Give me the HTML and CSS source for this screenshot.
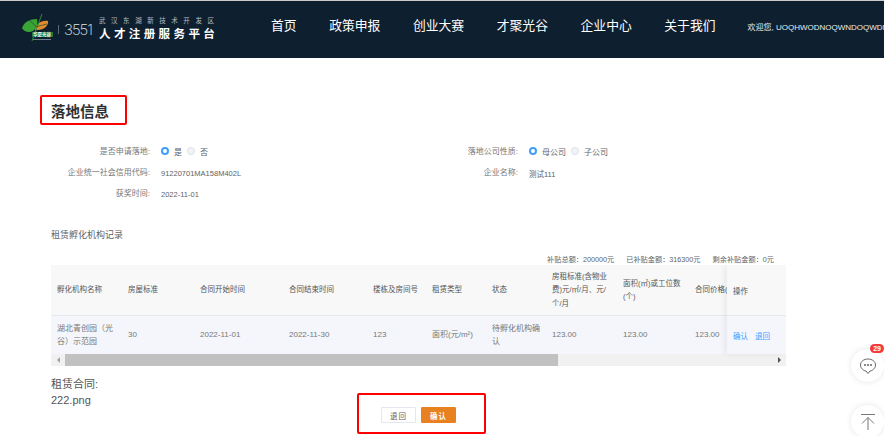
FILE: index.html
```html
<!DOCTYPE html>
<html lang="zh-CN">
<head>
  <meta charset="UTF-8" />
  <title>落地信息</title>
  <link rel="stylesheet" href="styles.css">
</head>
<body>
  <header class="header">
    <div class="brand">
      <svg class="logo" width="34" height="32" viewBox="0 0 34 32">
        <path d="M2 15C4 9 10 6 17 6C18 10 17 15 13 18C9 20 4 19 2 15Z" fill="#3aa535"/>
        <path d="M15 17C16 11 21 7 28 8C29 12 24 18 15 17Z" fill="#e58a2c"/>
        <path d="M22 1L12 28" stroke="#2e8b3a" stroke-width="1" fill="none"/>
        <path d="M9 7L16 13M15 14L27 11" stroke="#14502a" stroke-width=".7" fill="none"/>
        <rect x="12" y="19" width="21" height="5" fill="#1d7a3a"/>
        <text class="logo-text" x="13" y="23">华夏光谷</text>
        <rect x="13" y="26" width="18" height="1" fill="#6f7d86"/>
      </svg>
      <span class="brand-sep"></span>
      <span class="brand-num">3551</span>
      <div class="brand-text">
        <div class="brand-sub">武汉东湖新技术开发区</div>
        <div class="brand-name">人才注册服务平台</div>
      </div>
    </div>
    <nav class="nav">
      <a class="nav-item">首页</a>
      <a class="nav-item">政策申报</a>
      <a class="nav-item">创业大赛</a>
      <a class="nav-item">才聚光谷</a>
      <a class="nav-item">企业中心</a>
      <a class="nav-item">关于我们</a>
    </nav>
    <div class="welcome">欢迎您, UOQHWODNOQWNDOQWDNQOWD</div>
  </header>

  <main class="content">
    <h2 class="title">落地信息</h2>

    <div class="form">
      <div class="form-col">
        <div class="form-row">
          <label class="form-label">是否申请落地:</label>
          <div class="radios">
            <span class="radio on"></span><span class="radio-text">是</span>
            <span class="radio"></span><span class="radio-text">否</span>
          </div>
        </div>
        <div class="form-row">
          <label class="form-label">企业统一社会信用代码:</label>
          <div class="form-value">91220701MA158M402L</div>
        </div>
        <div class="form-row">
          <label class="form-label">获奖时间:</label>
          <div class="form-value">2022-11-01</div>
        </div>
      </div>
      <div class="form-col">
        <div class="form-row">
          <label class="form-label">落地公司性质:</label>
          <div class="radios">
            <span class="radio on"></span><span class="radio-text">母公司</span>
            <span class="radio"></span><span class="radio-text">子公司</span>
          </div>
        </div>
        <div class="form-row">
          <label class="form-label">企业名称:</label>
          <div class="form-value">测试111</div>
        </div>
      </div>
    </div>

    <div class="section-title">租赁孵化机构记录</div>
    <div class="summary">
      <span>补贴总额：200000元</span>
      <span>已补贴金额：316300元</span>
      <span>剩余补贴金额：0元</span>
    </div>

    <div class="table">
      <div class="table-row table-head">
        <div class="cell">孵化机构名称</div>
        <div class="cell">房屋标准</div>
        <div class="cell">合同开始时间</div>
        <div class="cell">合同结束时间</div>
        <div class="cell">楼栋及房间号</div>
        <div class="cell">租赁类型</div>
        <div class="cell">状态</div>
        <div class="cell">房租标准(含物业费)元/㎡/月、元/个/月</div>
        <div class="cell">面积(㎡)或工位数(个)</div>
        <div class="cell clip">合同价格(元)</div>
      </div>
      <div class="table-row table-body">
        <div class="cell">湖北青创园（光谷）示范园</div>
        <div class="cell">30</div>
        <div class="cell">2022-11-01</div>
        <div class="cell">2022-11-30</div>
        <div class="cell">123</div>
        <div class="cell">面积(元/m²)</div>
        <div class="cell">待孵化机构确认</div>
        <div class="cell">123.00</div>
        <div class="cell">123.00</div>
        <div class="cell clip">123.00</div>
      </div>
      <div class="fixed-col">
        <div class="fixed-head">操作</div>
        <div class="fixed-body"><a class="link">确认</a><a class="link">退回</a></div>
      </div>
      <div class="scrollbar">
        <span class="arrow-left"></span>
        <div class="scroll-track"><div class="scroll-thumb"></div></div>
        <span class="arrow-right"></span>
      </div>
    </div>

    <div class="contract">
      <div>租赁合同:</div>
      <div>222.png</div>
    </div>

    <div class="actions">
      <button class="btn">退回</button>
      <button class="btn btn-primary">确认</button>
    </div>
  </main>

  <div class="mark mark-title"></div>
  <div class="mark mark-actions"></div>

  <div class="float-btn float-chat">
    <span class="badge">29</span>
    <svg width="18" height="18" viewBox="0 0 18 18" fill="none" stroke="#666" stroke-width="1">
      <path d="M9 2C4.800 2 1.500 4.600 1.500 8S4.800 14 7 14L9 16.500L11 14C13.200 14 16.500 11.400 16.500 8S13.200 2 9 2Z"/>
      <circle cx="6" cy="8" r=".6" fill="#666"/><circle cx="9" cy="8" r=".6" fill="#666"/><circle cx="12" cy="8" r=".6" fill="#666"/>
    </svg>
  </div>
  <div class="float-btn float-top">
    <svg width="16" height="18" viewBox="0 0 16 18" fill="none" stroke="#777" stroke-width="1">
      <path d="M1 1.500H15M8 17V4.500M2 10.500L8 4.500L14 10.500"/>
    </svg>
  </div>
</body>
</html>
```

FILE: styles.css
```css
* {
  box-sizing: border-box;
}
html, body {
  height: 100%;
}
body {
  margin: 0;
  overflow: hidden;
  background: #fff;
  color: #606266;
  font-family: "Liberation Sans", "Noto Sans CJK SC", sans-serif;
  font-size: 8px;
}

/* header */
.header {
  display: flex;
  align-items: flex-start;
  height: 58px;
  border-top: 1px solid #c9c9c9;
  background: #0e2030;
  color: #fff;
  white-space: nowrap;
  overflow: hidden;
}
.brand {
  display: flex;
  flex: none;
  align-items: center;
  width: 271px;
  height: 46px;
  padding: 9px 0 0 20px;
}
.logo {
  flex: none;
}
.logo-text {
  fill: #fff;
  font-size: 4.500px;
  font-weight: 700;
}
.brand-sep {
  width: 1px;
  height: 9px;
  margin: 2px 5px 0 4px;
  background: #5a6873;
}
.brand-num {
  width: 35px;
  margin-top: 1px;
  font-family: Inter, "Liberation Sans", sans-serif;
  font-size: 15px;
  font-weight: 200;
  letter-spacing: -1px;
  color: #dfe3e6;
}
.brand-sub {
  font-size: 6.500px;
  letter-spacing: 5.550px;
  line-height: 9px;
  color: #b6bdc3;
}
.brand-name {
  margin-top: 2px;
  font-size: 11.500px;
  font-weight: 700;
  letter-spacing: 3.400px;
  line-height: 14px;
}
.nav {
  display: flex;
  flex: none;
  gap: 32.600px;
  padding-top: 16px;
}
.nav-item {
  font-size: 12.800px;
  line-height: 18px;
}
.welcome {
  margin-left: 32px;
  padding-top: 21px;
  font-size: 8px;
  line-height: 11px;
  color: #e8ebed;
}

/* page */
.content {
  padding: 0 98px 0 51px;
}
.title {
  margin: 44px 0 0;
  font-size: 14.500px;
  font-weight: 700;
  line-height: 20px;
  color: #303133;
}
.form {
  display: flex;
  margin-top: 18px;
}
.form-col {
  width: 368px;
}
.form-col + .form-col {
  width: 300px;
}
.form-row {
  display: flex;
  align-items: center;
  height: 21px;
}
.form-label {
  width: 99px;
  text-align: right;
  color: #777;
  font-size: 8px;
}
.form-value {
  margin-left: 11px;
  padding-top: 3px;
  font-size: 7.500px;
  color: #606266;
}
.radios {
  display: flex;
  align-items: center;
  margin-left: 11px;
  padding-top: 1px;
}
.radio {
  width: 8px;
  height: 8px;
  border: 1px solid #dcdfe6;
  border-radius: 50%;
  background: #f3f4f7;
}
.radio.on {
  border: 2.500px solid #409eff;
  background: #fff;
}
.radio-text {
  margin: 0 5px 0 5px;
  font-size: 8px;
}
.section-title {
  margin-top: 25px;
  font-size: 9px;
  line-height: 14px;
  color: #606266;
}
.summary {
  display: flex;
  justify-content: flex-end;
  gap: 12px;
  margin: 13px 0 0;
  padding-right: 12px;
  font-size: 7.200px;
  line-height: 10px;
}

/* table */
.table {
  position: relative;
  width: 735px;
  height: 101px;
  margin-top: 0;
  overflow: hidden;
  font-size: 7.500px;
}
.table-row {
  display: grid;
  grid-template-columns: 71px 72px 89px 84px 59px 60px 60px 71px 72px 38px;
  align-items: center;
}
.table-head {
  height: 51px;
  border-bottom: 1px solid #e6e8ec;
  background: #f8f8f9;
  color: #555;
}
.table-body {
  height: 38px;
  background: #f4f6fb;
  color: #777;
  font-size: 8px;
}
.cell {
  padding: 0 6px;
  line-height: 13.500px;
}
.clip {
  padding-right: 0;
  overflow: hidden;
  white-space: nowrap;
}
.fixed-col {
  position: absolute;
  top: 0;
  right: 0;
  width: 59px;
  height: 89px;
  background: #f8f8f9;
  box-shadow: -3px 0 6px rgba(0, 0, 0, 0.06);
}
.fixed-head {
  display: flex;
  align-items: center;
  height: 51px;
  padding-left: 6px;
  border-bottom: 1px solid #e6e8ec;
  color: #555;
}
.fixed-body {
  display: flex;
  align-items: center;
  gap: 7px;
  height: 38px;
  padding-left: 6px;
  background: #f4f6fb;
}
.link {
  color: #409eff;
  font-size: 7.500px;
}
.scrollbar {
  display: flex;
  align-items: center;
  height: 12px;
  background: #f1f1f1;
}
.scroll-track {
  flex: 1;
  height: 12px;
}
.scroll-thumb {
  width: 493px;
  height: 100%;
  background: #c1c1c1;
}
.arrow-left, .arrow-right {
  width: 14px;
  height: 12px;
  flex: none;
  display: flex;
  align-items: center;
  justify-content: center;
}
.arrow-left::before {
  content: "";
  border: 3px solid transparent;
  border-left-width: 0;
  border-right: 3px solid #a3a3a3;
}
.arrow-right::before {
  content: "";
  border: 3px solid transparent;
  border-right-width: 0;
  border-left: 3px solid #505050;
}

/* bottom */
.contract {
  margin-top: 10px;
  font-size: 11px;
  line-height: 16px;
  color: #555;
}
.actions {
  display: flex;
  gap: 5px;
  margin: -1px 0 0 330px;
}
.btn {
  width: 35px;
  height: 16px;
  padding: 0;
  border: 1px solid #e4e7ed;
  border-radius: 1px;
  background: #fff;
  color: #606266;
  font-family: inherit;
  font-size: 7.500px;
  letter-spacing: 1px;
}
.btn-primary {
  border-color: #e8811f;
  background: #e8811f;
  color: #fff;
  font-weight: 700;
}

/* red marks drawn over the shot */
.mark {
  position: absolute;
  border: 2px solid #f00;
  border-radius: 2px;
}
.mark-title {
  left: 40px;
  top: 95px;
  width: 87px;
  height: 30px;
}
.mark-actions {
  left: 357px;
  top: 393px;
  width: 129px;
  height: 41px;
}

/* floating buttons */
.float-btn {
  position: absolute;
  left: 851px;
  display: flex;
  align-items: center;
  justify-content: center;
  width: 33px;
  height: 33px;
  border-radius: 50%;
  background: #fff;
  box-shadow: 0 0 6px rgba(0, 0, 0, 0.1);
}
.float-chat {
  top: 349px;
}
.float-top {
  top: 405px;
}
.badge {
  position: absolute;
  top: -5px;
  right: 0;
  padding: 0 3px;
  border-radius: 5px;
  background: #f5393d;
  color: #fff;
  font-size: 7px;
  font-weight: 700;
  line-height: 9px;
}
```
